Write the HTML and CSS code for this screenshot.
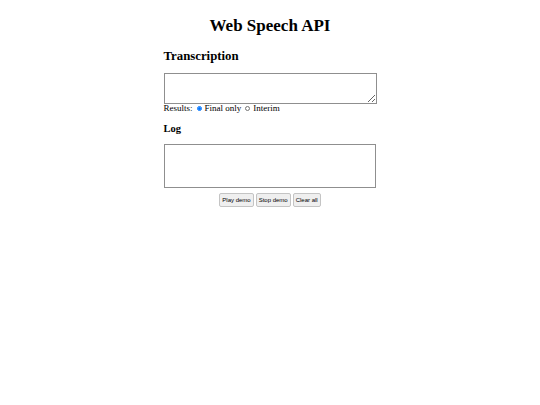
FILE: index.html
```html
<!DOCTYPE html>
<html>
<head>
<meta charset="utf-8">
<title>Web Speech API</title>
<link rel="stylesheet" href="styles.css">
</head>
<body>
<main class="page">
  <h1 class="title">Web Speech API</h1>
  <h2 class="section">Transcription</h2>
  <textarea class="transcript"></textarea>
  <div class="results">
    <span>Results:</span>
    <label class="opt"><input type="radio" name="mode" checked> Final only</label>
    <label class="opt"><input type="radio" name="mode"> Interim</label>
  </div>
  <h3 class="sub">Log</h3>
  <div class="log"></div>
  <div class="buttons">
    <button class="btn">Play demo</button>
    <button class="btn">Stop demo</button>
    <button class="btn">Clear all</button>
  </div>
</main>
</body>
</html>
```

FILE: styles.css
```css
html, body {
  margin: 0;
  padding: 0;
  background: #fff;
}
body {
  font-family: "Liberation Serif", "Times New Roman", serif;
  color: #000;
  font-size: 9px;
}
.page {
  width: 213px;
  margin: 0 auto;
  padding-top: 15px;
  display: flex;
  flex-direction: column;
}
.title {
  font-size: 17px;
  font-weight: bold;
  text-align: center;
  margin: 0 0 11px 0;
  line-height: 22px;
}
.section {
  font-size: 12.8px;
  font-weight: bold;
  margin: 0 0 9px 0;
  line-height: 16px;
}
.transcript {
  box-sizing: border-box;
  width: 213px;
  height: 31px;
  margin: 0;
  border: 1px solid #8f8f8f;
  padding: 2px;
  font: inherit;
  resize: both;
  display: block;
}
.results {
  display: flex;
  align-items: center;
  gap: 3px;
  line-height: 9px;
  height: 9px;
}
.opt {
  display: flex;
  align-items: center;
  gap: 3px;
}
.opt input {
  width: 5px;
  height: 5px;
  margin: 0 0 0 1px;
}
.sub {
  font-size: 10.5px;
  font-weight: bold;
  margin: 9px 0 9px 0;
  line-height: 13px;
}
.log {
  box-sizing: border-box;
  width: 212px;
  height: 44px;
  border: 1px solid #8f8f8f;
}
.buttons {
  display: flex;
  justify-content: center;
  gap: 2px;
  margin-top: 5px;
}
.btn {
  font-family: "Liberation Sans", Arial, sans-serif;
  font-size: 6px;
  height: 14px;
  padding: 0 2px;
  border: 1px solid #c4c4c4;
  background: #efefef;
  border-radius: 2px;
  color: #000;
}
```
